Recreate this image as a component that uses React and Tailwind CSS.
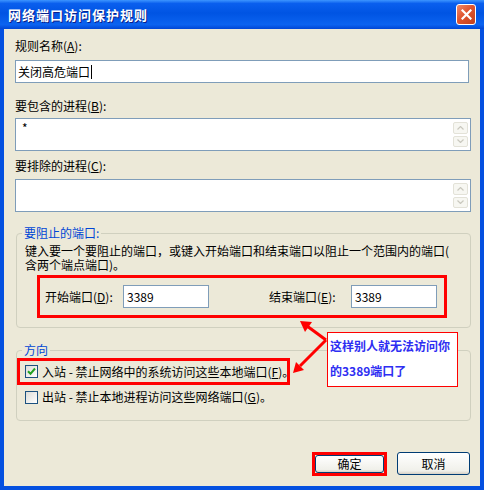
import React from "react";

function K({ c }) {
  return <span className="underline">{c}</span>;
}

function ScrollBtn({ up }) {
  return (
    <div className="h-[12px] w-[15px] rounded-[2px] border border-[#E3E2D8] bg-[#F7F7F2] flex items-center justify-center">
      <svg width="7" height="4" viewBox="0 0 7 4">
        <path d={up ? "M0.5 3.5 L3.5 0.5 L6.5 3.5" : "M0.5 0.5 L3.5 3.5 L6.5 0.5"} fill="none" stroke="#C9C8BE" strokeWidth="1.2" />
      </svg>
    </div>
  );
}

function ListBox({ children }) {
  return (
    <div className="h-[33px] w-[456px] bg-white border border-[#7F9DB9] flex">
      <div className="flex-1 pl-[6px] pt-[2px] leading-[14px]">{children}</div>
      <div className="flex flex-col gap-[2px] py-[3px] mr-[2px]">
        <ScrollBtn up />
        <ScrollBtn />
      </div>
    </div>
  );
}

function CheckBox({ checked }) {
  return (
    <div className="w-[13px] h-[13px] border border-[#1C5180] bg-[linear-gradient(135deg,#DCDCD7,#FFFFFF)] flex items-center justify-center shrink-0">
      {checked && (
        <svg width="9" height="9" viewBox="0 0 9 9">
          <path d="M1 4.2 L3.5 6.8 L8 1.5" fill="none" stroke="#21A121" strokeWidth="2" />
        </svg>
      )}
    </div>
  );
}

function Button({ children }) {
  return (
    <div className="h-full w-full rounded-[3px] border border-[#003C74] bg-[linear-gradient(#FFFFFF,#F0F0EA_85%,#D6D0C5)] flex items-center justify-center">
      {children}
    </div>
  );
}

export default function App() {
  return (
    <div className="relative w-[484px] h-[490px] flex flex-col bg-[#0450E0] text-[12px] text-black font-['Noto_Sans_CJK_SC',sans-serif]">
      {/* title bar */}
      <div className="h-[29px] shrink-0 flex items-center justify-between pl-[8px] pr-[8px] bg-[linear-gradient(#3D95FF_0%,#0A5FEE_12%,#0054E3_45%,#0B63F0_85%,#0046D5_100%)]">
        <span className="text-white font-bold text-[13px] tracking-[1px] [text-shadow:1px_1px_#0A1F8A]">网络端口访问保护规则</span>
        <div className="w-[20px] h-[21px] rounded-[3px] border border-white bg-[linear-gradient(135deg,#F08A6A,#E0552F_45%,#C2401C)] flex items-center justify-center">
          <svg width="11" height="11" viewBox="0 0 11 11">
            <path d="M1.5 1.5 L9.5 9.5 M9.5 1.5 L1.5 9.5" stroke="white" strokeWidth="2.2" strokeLinecap="square" />
          </svg>
        </div>
      </div>

      {/* client area */}
      <div className="flex-1 mx-[4px] mb-[4px] bg-[#ECE9D8] flex flex-col pt-[10px] px-[11px] pb-[10px]">
        <div className="leading-[14px]">规则名称(<K c="A" />):</div>
        <div className="mt-[7px] h-[23px] bg-white border border-[#7F9DB9] flex items-center pl-[2px] leading-[14px]">
          关闭高危端口<span className="inline-block w-[1px] h-[14px] bg-black ml-[1px]" />
        </div>

        <div className="mt-[16px] leading-[14px]">要包含的进程(<K c="B" />):</div>
        <div className="mt-[5px]">
          <ListBox>*</ListBox>
        </div>

        <div className="mt-[8px] leading-[14px]">要排除的进程(<K c="C" />):</div>
        <div className="mt-[6px]">
          <ListBox />
        </div>

        <fieldset className="mt-[14px] ml-[1px] w-[455px] border border-[#D0D0BF] rounded-[4px] pt-[4px] pl-[8px] pr-[8px] pb-[9px]">
          <legend className="ml-[-3px] px-[2px] leading-[14px] text-[#0046D5]">要阻止的端口:</legend>
          <div className="leading-[14px] whitespace-nowrap">
            键入要一个要阻止的端口，或键入开始端口和结束端口以阻止一个范围内的端口(
            <br />
            含两个端点端口)。
          </div>
          <div className="mt-[3px] ml-[12px] w-[410px] h-[43px] border-[3px] border-[#FF0000] flex items-center pl-[5px]">
            <div className="w-[78px]">开始端口(<K c="D" />):</div>
            <div className="w-[86px] h-[23px] bg-white border border-[#7F9DB9] flex items-center pl-[3px]">3389</div>
            <div className="w-[60px]" />
            <div className="w-[82px]">结束端口(<K c="E" />):</div>
            <div className="w-[86px] h-[23px] bg-white border border-[#7F9DB9] flex items-center pl-[3px]">3389</div>
          </div>
        </fieldset>

        <fieldset className="mt-[15px] ml-[1px] w-[455px] border border-[#D0D0BF] rounded-[4px] pt-[1px] pb-[14px]">
          <legend className="ml-[5px] px-[2px] leading-[14px] text-[#0046D5]">方向</legend>
          <div className="w-[273px] h-[27px] border-[3px] border-[#FF0000] flex items-center pl-[5px] whitespace-nowrap">
            <CheckBox checked />
            <span className="ml-[4px]">入站 - 禁止网络中的系统访问这些本地端口(<K c="F" />)。</span>
          </div>
          <div className="mt-[3px] pl-[8px] flex items-center whitespace-nowrap">
            <CheckBox />
            <span className="ml-[4px]">出站 - 禁止本地进程访问这些网络端口(<K c="G" />)。</span>
          </div>
        </fieldset>

        <div className="mt-auto flex justify-end gap-[10px] -mr-[1px]">
          <div className="w-[75px] h-[24px] border-[3px] border-[#FF0000]">
            <Button>确定</Button>
          </div>
          <div className="w-[73px] h-[23px]">
            <Button>取消</Button>
          </div>
        </div>
      </div>

      {/* annotation */}
      <div className="absolute left-[327px] top-[332px] w-[131px] h-[55px] bg-white border border-[#FF0000] pl-[2px] text-[12px] font-bold text-[#2E2EF2] leading-[25px] whitespace-nowrap">
        这样别人就无法访问你
        <br />
        的3389端口了
      </div>
      <svg className="absolute left-0 top-0 pointer-events-none" width="484" height="490" viewBox="0 0 484 490">
        <line x1="326" y1="340" x2="307" y2="326" stroke="#FF0000" strokeWidth="3" />
        <polygon points="300,321 312,322 305,332" fill="#FF0000" />
        <line x1="326" y1="340" x2="300" y2="366" stroke="#FF0000" strokeWidth="3" />
        <polygon points="293,373 304,370 296,362" fill="#FF0000" />
      </svg>
    </div>
  );
}
